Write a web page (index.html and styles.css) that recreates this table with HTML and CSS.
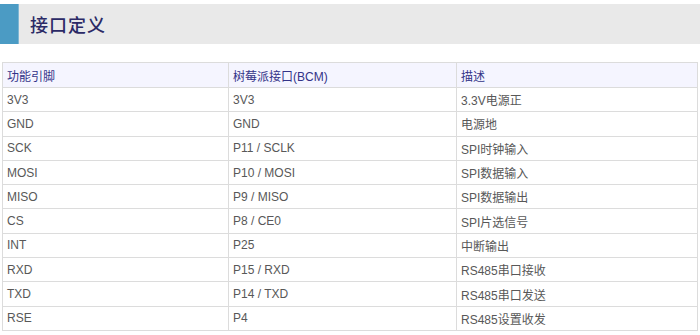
FILE: index.html
```html
<!DOCTYPE html>
<html lang="zh">
<head>
<meta charset="utf-8">
<link rel="stylesheet" href="styles.css">
</head>
<body>
<div class="page">
  <div class="title-bar">
    <div class="title-mark"></div>
    <h2 class="title">接口定义</h2>
  </div>
  <table class="pin-table">
    <colgroup>
      <col class="c1"><col class="c2"><col class="c3">
    </colgroup>
    <thead>
      <tr><th>功能引脚</th><th>树莓派接口(BCM)</th><th>描述</th></tr>
    </thead>
    <tbody>
      <tr><td>3V3</td><td>3V3</td><td>3.3V电源正</td></tr>
      <tr><td>GND</td><td>GND</td><td>电源地</td></tr>
      <tr><td>SCK</td><td>P11 / SCLK</td><td>SPI时钟输入</td></tr>
      <tr><td>MOSI</td><td>P10 / MOSI</td><td>SPI数据输入</td></tr>
      <tr><td>MISO</td><td>P9 / MISO</td><td>SPI数据输出</td></tr>
      <tr><td>CS</td><td>P8 / CE0</td><td>SPI片选信号</td></tr>
      <tr><td>INT</td><td>P25</td><td>中断输出</td></tr>
      <tr><td>RXD</td><td>P15 / RXD</td><td>RS485串口接收</td></tr>
      <tr><td>TXD</td><td>P14 / TXD</td><td>RS485串口发送</td></tr>
      <tr><td>RSE</td><td>P4</td><td>RS485设置收发</td></tr>
    </tbody>
  </table>
</div>
</body>
</html>
```

FILE: styles.css
```css
html, body {
  margin: 0;
  padding: 0;
  background: #ffffff;
}
body {
  font-family: "Liberation Sans", "Noto Sans CJK SC", sans-serif;
  font-size: 12px;
  color: #585858;
}
.page {
  padding-top: 4px;
}
.title-bar {
  display: flex;
  align-items: center;
  height: 40px;
  background: #e9e9e9;
}
.title-mark {
  width: 18px;
  height: 40px;
  background: #4b9bc4;
  border-right: 1px solid #7fb6d3;
}
.title {
  margin: 0 0 0 11px;
  font-family: "Noto Sans CJK SC", sans-serif;
  font-size: 18px;
  font-weight: 500;
  color: #2b2a66;
  letter-spacing: 1px;
}
.pin-table {
  margin: 18px 0 0 2px;
  width: 695px;
  border-collapse: collapse;
  table-layout: fixed;
}
.c1 { width: 226px; }
.c2 { width: 228px; }
.c3 { width: 241px; }
.pin-table th,
.pin-table td {
  border: 1px solid #dcdcdc;
  height: 23.3px;
  padding: 0 0 0 4px;
  text-align: left;
  vertical-align: middle;
  font-weight: normal;
  white-space: nowrap;
}
.pin-table th {
  height: 24px;
  background: #f5f5ff;
  color: #333388;
}
```
